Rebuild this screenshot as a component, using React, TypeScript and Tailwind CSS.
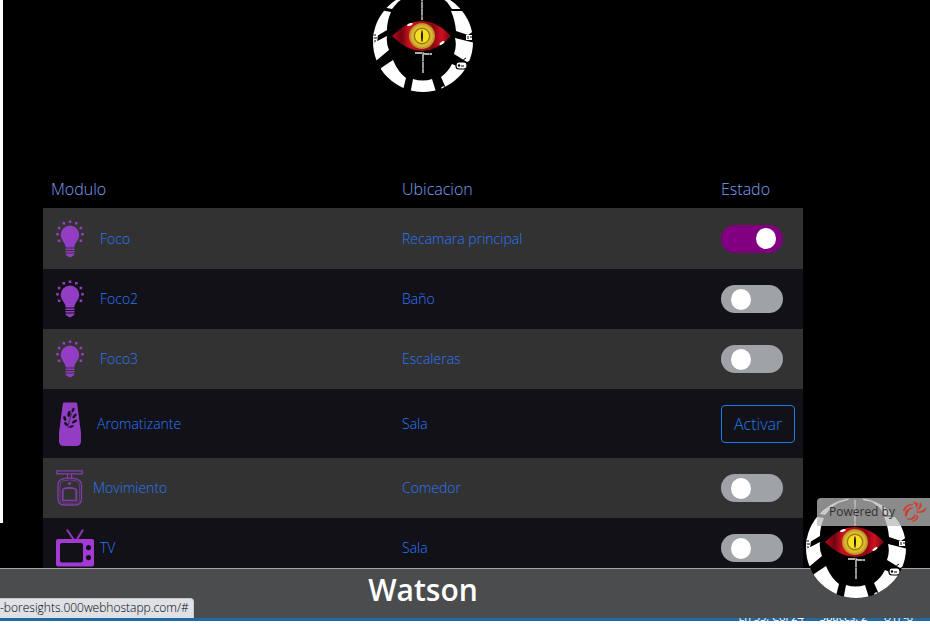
import React from "react";

function EyeLogo() {
  return (
    <svg viewBox="0 0 100 100" className="block size-[100px]" role="img" aria-label="Watson">
      <defs>
        <clipPath id="disc">
          <circle cx="50" cy="50" r="50" />
        </clipPath>
        <linearGradient id="iris" x1="0" x2="1">
          <stop offset="0" stopColor="#c00818" />
          <stop offset=".16" stopColor="#6d0510" />
          <stop offset=".3" stopColor="#d00f20" />
          <stop offset=".7" stopColor="#8c0713" />
          <stop offset=".84" stopColor="#d00f20" />
          <stop offset="1" stopColor="#6d0510" />
        </linearGradient>
        <radialGradient id="gold">
          <stop offset="0" stopColor="#fff03a" />
          <stop offset=".48" stopColor="#f2d418" />
          <stop offset=".55" stopColor="#a5841c" />
          <stop offset=".72" stopColor="#e3bf35" />
          <stop offset="1" stopColor="#b28a22" />
        </radialGradient>
      </defs>
      <g clipPath="url(#disc)">
        <rect width="100" height="100" fill="#000" />
        <g fill="#fff">
          <path d="M9 15 24 -2 44 -2 42 2 32 5 25 10 19 17Z" />
          <path d="M56 -2 78 -2 92 17 79 17 74 10 66 4 57 2Z" />
          <path d="M-5 20 7 18 18 20Q14 29 14 38L4 44-5 46Z" />
          <path d="M-5 54 14 44Q13 51 16 58L4 68-5 70Z" />
          <path d="M8 76 20 68Q25 80 33 86L29 102 0 102Z" />
          <path d="M40 87Q50 90 59 87L64 103H37Z" />
          <path d="M68 85Q75 80 79 72L98 80 76 103Z" />
          <path d="M82 46 102 51V66L94 70 81 62Q84 54 82 46Z" />
          <path d="M78 19 92 19 102 38 95 43 83 39Q82 28 78 19Z" />
        </g>
        <g fill="#fff">
          <path d="M0 40h3l2 3-1 7-4 1z" />
          <rect x="93" y="43" width="6" height="5" />
          <rect x="83" y="70" width="11" height="7" rx="3" stroke="#000" strokeWidth="1.200" />
        </g>
        <g fill="none" stroke="#000" strokeWidth="1">
          <path d="M0 43h3M1 46h3M1 49h2M95 44v3M97 45h2" />
          <path d="M90 70q0-3 3-4M88 74h3" />
        </g>
        <circle cx="86" cy="73.500" r="1.200" fill="#000" />
        <path d="M68 96q2-3 4-1l-2 4z" fill="#fff" />
        <path d="M49 2v26M42 61h8l2 1h7M50 62v19" fill="none" stroke="#e8e8e8" strokeWidth="1.300" strokeDasharray="7 .4" />
        <path d="M19 44Q34 29 48 29Q64 29 78 44Q64 59 49 59Q34 59 19 44Z" fill="url(#iris)" />
        <circle cx="49" cy="44" r="13" fill="url(#gold)" />
        <circle cx="49" cy="44" r="7.500" fill="#f6df20" stroke="#8f7015" />
        <ellipse cx="49" cy="44" rx="1" ry="6" fill="#201800" />
        <ellipse cx="37" cy="32.500" rx="3" ry="1.200" fill="#fff" transform="rotate(-20 37 32.500)" />
        <ellipse cx="69" cy="51" rx="3" ry="1.200" fill="#fff" transform="rotate(-35 69 51)" />
      </g>
    </svg>
  );
}

function BulbIcon() {
  return (
    <svg viewBox="0 0 44 38" className="h-[38px] w-11 shrink-0" fill="#933dc5" aria-hidden="true">
      <path d="M14 5.500a9.300 9.300 0 0 1 9.300 9.300c0 5.500-4.800 7.600-5 12.700H9.700C9.500 22.400 4.700 20.300 4.700 14.800A9.300 9.300 0 0 1 14 5.500Z" />
      <path d="M9.500 28.500h9v1.500h-9zM9.500 31h9v1.500h-9zM9.500 33.500h9q0 2-2 2.500-2.500 2.500-5 0-2-.5-2-2.500Z" />
      <path d="M12.700.5h2.600v2.600h-2.600zM6.500 2h2.600v2.600H6.500zM19 2h2.600v2.600H19zM1.800 6.700h2.600v2.600H1.800zM23.600 6.700h2.600v2.600h-2.600zM.2 13h2.600v2.600H.2zM25.200 13h2.600v2.600h-2.600zM1.800 19.500h2.600v2.600H1.800zM23.600 19.500h2.600v2.600h-2.600z" />
    </svg>
  );
}

function FreshenerIcon() {
  return (
    <svg viewBox="0 0 41 46" className="h-[46px] w-[41px] shrink-0" aria-hidden="true">
      <path d="M8 1.500h12q1 0 1.200 1.200L25 32v8q0 5-5 5H8q-5 0-5-5v-8L6.800 2.700Q7 1.500 8 1.500Z" fill="#933dc5" />
      <g fill="#131118">
        <ellipse cx="17" cy="9" rx="1.300" ry="2.500" transform="rotate(25 17 9)" />
        <ellipse cx="13" cy="13" rx="1.600" ry="3" transform="rotate(8 13 13)" />
        <ellipse cx="18.500" cy="15" rx="1.300" ry="3" transform="rotate(40 18.500 15)" />
        <ellipse cx="8.800" cy="17.500" rx="1.400" ry="2.600" transform="rotate(-20 8.800 17.500)" />
        <ellipse cx="18.500" cy="20.500" rx="1.300" ry="3" transform="rotate(58 18.500 20.500)" />
        <ellipse cx="10" cy="23" rx="1.300" ry="2.300" transform="rotate(-45 10 23)" />
        <ellipse cx="15.500" cy="25.500" rx="1.100" ry="2.300" transform="rotate(70 15.500 25.500)" />
      </g>
      <path d="M12 27Q12.500 20 16 12" fill="none" stroke="#131118" strokeWidth=".6" />
    </svg>
  );
}

function SensorIcon() {
  return (
    <svg viewBox="0 0 37 36" className="h-9 w-[37px] shrink-0" fill="none" stroke="#843cac" strokeWidth="1.300" aria-hidden="true">
      <path d="M.8.8h25.400v3H.8zM11.500 4v4.500M15.500 4v4.500" />
      <path d="M6 9.200Q13.500 7 21 9.200 25.500 11 25.500 15v14q0 6-7 6h-10q-6.500 0-6.500-6V15q0-4 4-5.800Z" />
      <path d="M6.500 11Q13.500 8.800 20.500 11 23.600 12.500 23.600 16v12.500q0 4.700-5.500 4.700H9q-5 0-5-4.700V16q0-3.500 2.500-5Z" strokeWidth=".7" />
      <path d="M8.500 18.500q5-1.400 10 0 1.800.5 1.800 2V30.500H6.700v-10q0-1.500 1.800-2Z" strokeWidth="1.700" />
      <circle cx="13.500" cy="13.500" r="1.500" fill="#843cac" stroke="none" />
    </svg>
  );
}

function TvIcon() {
  return (
    <svg viewBox="0 0 44 38" className="h-[38px] w-11 shrink-0" aria-hidden="true">
      <path d="M11.500 1.500 18 11M26.500 1.500 20.500 11" stroke="#8e35b5" strokeWidth="2.200" strokeLinecap="round" />
      <path fillRule="evenodd" fill="#a33ad6" d="M2 10h34q2 0 2 2v23.500q0 2-2 2H2q-2 0-2-2V12q0-2 2-2Zm4 4q-2 0-2 2v15.500q0 2 2 2h19q2 0 2-2V16q0-2-2-2Zm26.500 2a2.600 2.600 0 1 0 .01 0Zm0 10a2.600 2.600 0 1 0 .01 0Z" />
    </svg>
  );
}

function Toggle({ label, on }: { label: string; on?: boolean }) {
  return (
    <input
      type="checkbox"
      aria-label={label}
      defaultChecked={on}
      className="flex h-7 w-[62px] cursor-pointer appearance-none items-center rounded-full bg-[#9fa3a7] px-[10px] before:block before:h-[21px] before:w-5 before:rounded-[50%] before:bg-white before:content-[''] checked:justify-end checked:bg-[#800080] checked:px-[7px]"
    />
  );
}

type Module = {
  name: string;
  place: string;
  icon: React.ReactNode;
  on?: boolean;
  action?: boolean;
};

const modules: Module[] = [
  { name: "Foco", place: "Recamara principal", icon: <BulbIcon />, on: true },
  { name: "Foco2", place: "Baño", icon: <BulbIcon /> },
  { name: "Foco3", place: "Escaleras", icon: <BulbIcon /> },
  { name: "Aromatizante", place: "Sala", icon: <FreshenerIcon />, action: true },
  { name: "Movimiento", place: "Comedor", icon: <SensorIcon /> },
  { name: "TV", place: "Sala", icon: <TvIcon /> },
];

export default function App() {
  return (
    <div className="relative flex h-screen flex-col overflow-hidden bg-white font-['Open_Sans','Noto_Sans',sans-serif] font-light">
      <main className="flex min-h-0 flex-1 overflow-hidden bg-black">
        <div className="h-[523px] w-[3px] shrink-0 bg-white" />
        <div className="min-w-0 flex-1 pr-[127px] pl-10">
          <header className="-mt-2 flex h-[177px] justify-center">
            <EyeLogo />
          </header>
          <table className="w-full table-fixed border-collapse text-left">
            <thead>
              <tr className="h-[39px] text-base text-[#7f9ff0]">
                <th className="px-2 font-light">Modulo</th>
                <th className="w-[319px] px-2 font-light">Ubicacion</th>
                <th className="w-[90px] px-2 font-light">Estado</th>
              </tr>
            </thead>
            <tbody className="text-sm text-[#2878fa]">
              {modules.map((m) => (
                <tr key={m.name} className={`odd:bg-[#323232] even:bg-[#131118] ${m.action ? "h-[69px]" : "h-[60px] first:h-[61px]"}`}>
                  <td className="pr-2 pl-[13px]">
                    <a href="#" className="flex items-center">
                      {m.icon}
                      {m.name}
                    </a>
                  </td>
                  <td className="px-2">{m.place}</td>
                  <td className="pl-2">
                    {m.action ? (
                      <button type="button" className="block h-[38px] rounded border border-[#1c7be8] px-3 text-base text-[#1c7be8]">
                        Activar
                      </button>
                    ) : (
                      <Toggle label={m.name} on={m.on} />
                    )}
                  </td>
                </tr>
              ))}
            </tbody>
          </table>
        </div>
      </main>

      <footer className="h-[50px] shrink-0 border-t border-[#a5a5a7] bg-[#4b4c4d] pr-[84px] text-center text-3xl leading-[42px] font-semibold text-white">
        Watson
      </footer>
      <div className="flex h-[3px] shrink-0 items-end justify-end gap-4 overflow-hidden bg-[#2069a3] pr-[17px] text-[11px] leading-[9px] font-normal whitespace-nowrap text-white">
        <span>Ln 55, Col 24</span>
        <span>Spaces: 2</span>
        <span>UTF-8</span>
      </div>
      <div className="h-[10px] shrink-0 bg-white" />

      <div className="absolute bottom-[13px] left-0 h-5 rounded-tr border-t border-r border-[#c6c9cc] bg-[#dee1e6] pr-1 text-xs leading-[18px] font-light text-black">
        -boresights.000webhostapp.com/#
      </div>
      <div className="absolute right-6 bottom-[33px]">
        <EyeLogo />
      </div>
      <a
        href="#"
        className="absolute right-0 bottom-[105px] flex h-7 w-[113px] items-center gap-2 rounded-tl bg-[#bababa]/75 pl-3 text-xs font-normal whitespace-nowrap text-[#303030]"
      >
        Powered by
        <svg viewBox="0 0 24 24" className="size-6 shrink-0" fill="#dc3527" stroke="#dc3527" strokeWidth=".6" aria-hidden="true">
          <path d="M0 11Q2 4 10 4.500 3 5.500 1.500 11Z" />
          <path d="M2 16Q2 8 10 7.500 4.500 9.500 3.500 16Z" />
          <path d="M10 2Q17 2 13.500 8 14 4 10 2Z" />
          <path d="M17 2.500Q21 7 13.500 10.500 18 6.500 17 2.500Z" />
          <path d="M23 8Q22 14 13.500 12 20 12 23 8Z" />
          <path d="M4 19Q10 19.500 12 14 13 21 4 19Z" />
          <path d="M9 21.500Q14 20 14 15 17 20 9 21.500Z" />
        </svg>
      </a>
    </div>
  );
}
